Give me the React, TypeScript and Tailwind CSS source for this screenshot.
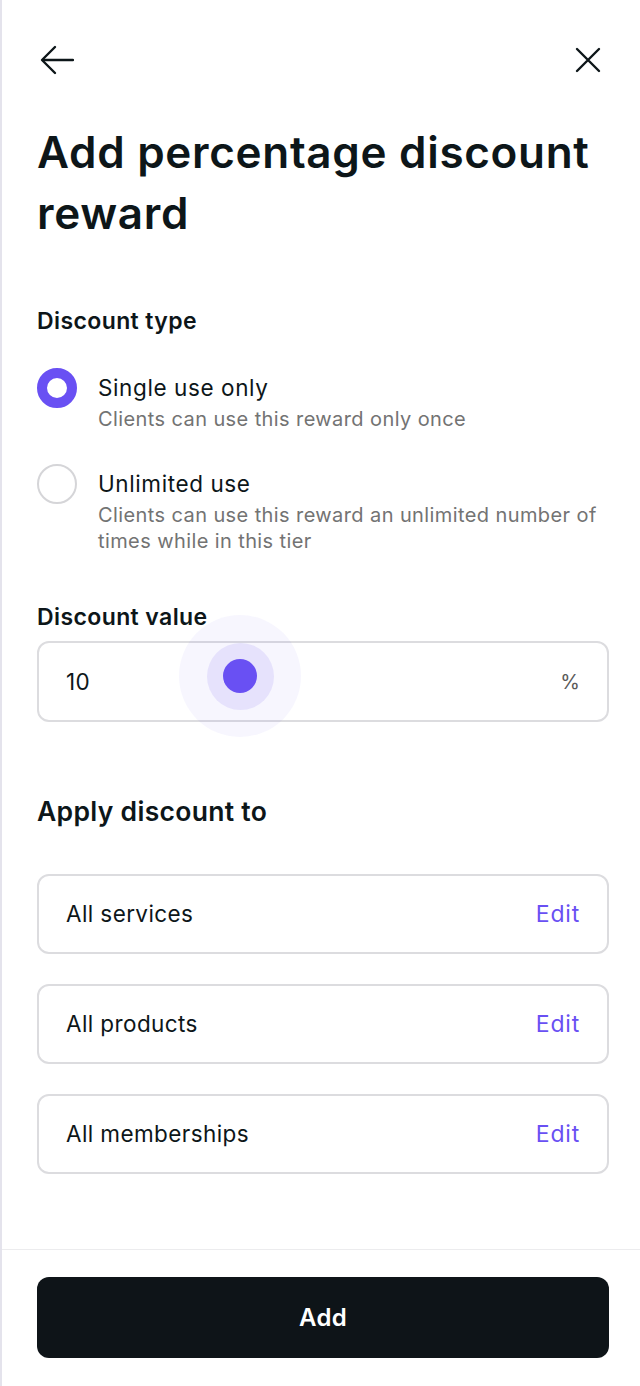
import React, { useState } from 'react';

const scopes = ['All services', 'All products', 'All memberships'];

function Radio({ checked }: { checked: boolean }) {
  return (
    <span
      className={`block w-10 h-10 rounded-full flex-shrink-0 ${
        checked ? 'border-[10px] border-[#6950f3] bg-white' : 'border-2 border-[#d5d5d8] bg-white'
      }`}
    />
  );
}

export default function App() {
  const [type, setType] = useState<'single' | 'unlimited'>('single');
  const [value, setValue] = useState('10');

  return (
    <div
      className="min-h-screen w-full bg-white border-l-2 border-[#e4e3ec] text-[#0d1619]"
      style={{ fontFamily: 'Inter, "Noto Sans", sans-serif' }}
    >
      <div className="pl-[35px] pr-[31px]">
        <div className="h-[120px] flex items-center justify-between">
          <button className="w-9 h-9 flex items-center justify-center ml-[2px]">
            <svg width="34" height="30" viewBox="0 0 34 30" fill="none" stroke="#0d1619" strokeWidth="2.4" strokeLinecap="round" strokeLinejoin="round">
              <path d="M33 15H3" />
              <path d="M15 2L2 15l13 13" />
            </svg>
          </button>
          <button className="w-9 h-9 flex items-center justify-center mr-[3px]">
            <svg width="26" height="26" viewBox="0 0 26 26" fill="none" stroke="#0d1619" strokeWidth="2.4" strokeLinecap="round">
              <path d="M2 2l22 22M24 2L2 24" />
            </svg>
          </button>
        </div>

        <h1 className="mt-[2px] text-[44px] leading-[61px] font-semibold tracking-[0.7px]">
          Add percentage discount reward
        </h1>

        <h2 className="mt-[62px] text-[23px] leading-[30px] font-semibold tracking-[0.4px]">Discount type</h2>

        <div className="mt-[37px] flex flex-col gap-[37px]">
          <button onClick={() => setType('single')} className="flex gap-[21px] text-left">
            <span className="h-[30px] flex items-center">
              <Radio checked={type === 'single'} />
            </span>
            <span className="flex flex-col">
              <span className="text-[22.5px] leading-[30px] tracking-[0.6px]">Single use only</span>
              <span className="mt-[3px] text-[20px] leading-[26px] tracking-[0.4px] text-[#737373]">
                Clients can use this reward only once
              </span>
            </span>
          </button>
          <button onClick={() => setType('unlimited')} className="flex gap-[21px] text-left">
            <span className="h-[30px] flex items-center">
              <Radio checked={type === 'unlimited'} />
            </span>
            <span className="flex flex-col">
              <span className="text-[22.5px] leading-[30px] tracking-[0.6px]">Unlimited use</span>
              <span className="mt-[3px] text-[20px] leading-[26px] tracking-[0.4px] text-[#737373]">
                Clients can use this reward an unlimited number of times while in this tier
              </span>
            </span>
          </button>
        </div>

        <h2 className="mt-[48px] text-[23px] leading-[30px] font-semibold tracking-[0.4px]">Discount value</h2>

        <div className="relative mt-[9px] h-[81px] rounded-xl border-2 border-[#dcdcdf] flex items-center px-[27px]">
          <input
            value={value}
            onChange={(e) => setValue(e.target.value)}
            className="flex-1 bg-transparent outline-none text-[22.5px] tracking-[0.4px] text-[#0d1619]"
          />
          <span className="text-[20px] text-[#5a5a5a]">%</span>
          <span className="absolute left-[201px] top-[33px] -translate-x-1/2 -translate-y-1/2 w-[122px] h-[122px] rounded-full bg-[#6950f3]/[0.05] flex items-center justify-center pointer-events-none">
            <span className="w-[67px] h-[67px] rounded-full bg-[#e6e2fc] flex items-center justify-center">
              <span className="w-[34px] h-[34px] rounded-full bg-[#6950f3]" />
            </span>
          </span>
        </div>

        <h2 className="mt-[72px] text-[26.5px] leading-[34px] font-semibold tracking-[0.3px]">Apply discount to</h2>

        <div className="mt-[46px] flex flex-col gap-[30px]">
          {scopes.map((s) => (
            <div
              key={s}
              className="h-[80px] rounded-xl border-2 border-[#dcdcdf] flex items-center justify-between px-[27px]"
            >
              <span className="text-[22.5px] tracking-[0.4px]">{s}</span>
              <button className="text-[23px] tracking-[0.8px] text-[#6950f3]">Edit</button>
            </div>
          ))}
        </div>
      </div>

      <div className="mt-[75px] border-t border-[#ececee]" />

      <div className="pl-[35px] pr-[31px] pt-[27px] pb-[28px]">
        <button className="w-full h-[81px] rounded-xl bg-[#0e1418] text-white text-[24px] font-semibold tracking-[0.3px]">
          Add
        </button>
      </div>
    </div>
  );
}
